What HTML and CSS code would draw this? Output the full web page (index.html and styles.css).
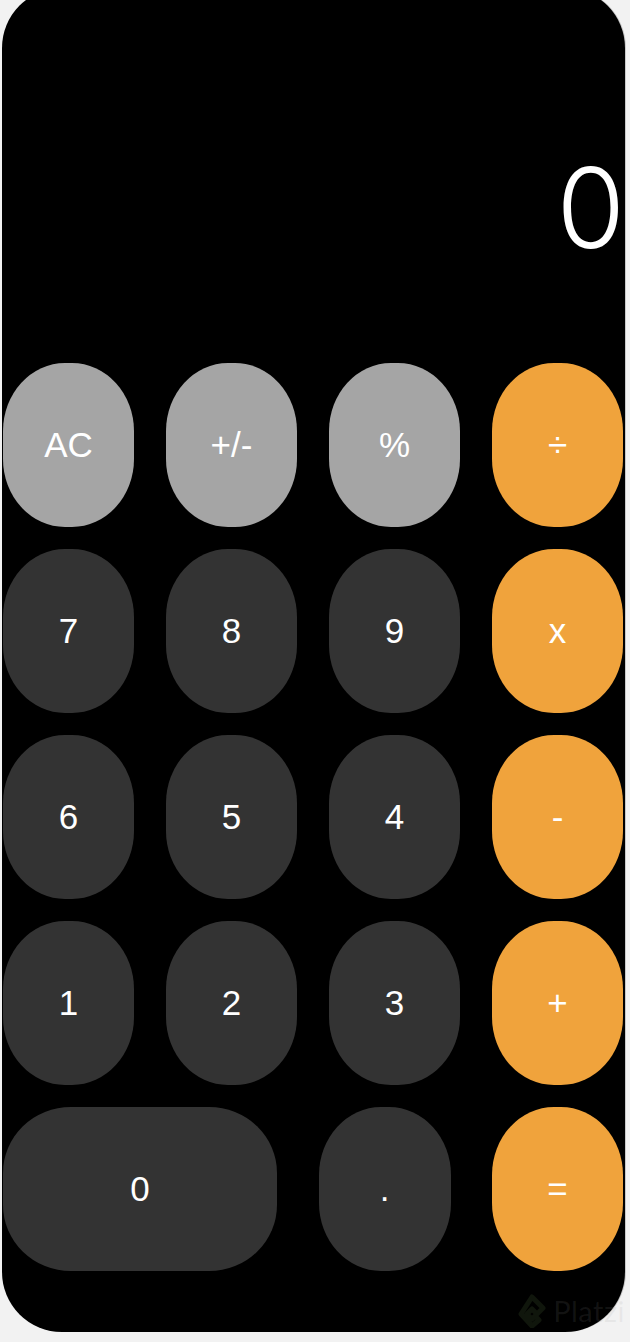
FILE: index.html
```html
<!DOCTYPE html>
<html lang="es">
<head>
<meta charset="utf-8">
<title>Calculadora</title>
<link rel="stylesheet" href="styles.css">
</head>
<body>
<div class="calc">
  <div class="display"><span class="result">0</span></div>
  <div class="keypad">
    <button class="key fn">AC</button>
    <button class="key fn">+/-</button>
    <button class="key fn">%</button>
    <button class="key op">÷</button>
    <button class="key num">7</button>
    <button class="key num">8</button>
    <button class="key num">9</button>
    <button class="key op">x</button>
    <button class="key num">6</button>
    <button class="key num">5</button>
    <button class="key num">4</button>
    <button class="key op">-</button>
    <button class="key num">1</button>
    <button class="key num">2</button>
    <button class="key num">3</button>
    <button class="key op">+</button>
    <div class="last-row">
      <button class="key num zero">0</button>
      <button class="key num dot">.</button>
      <button class="key op">=</button>
    </div>
  </div>
  <div class="watermark">
    <svg class="wm-logo" viewBox="0 0 30 34" width="30" height="34">
      <path d="M15 3 L26 14 L20 20 L15 15 L10 20 L15 25 L18 22 L22 26 L15 32 L4 20 Z" fill="none" stroke="currentColor" stroke-width="5" stroke-linejoin="round"/>
    </svg>
    <span class="wm-text">Platzi</span>
  </div>
</div>
</body>
</html>
```
FILE: styles.css
```css
html, body {
  margin: 0;
  padding: 0;
  background: #f2f2f2;
  overflow: hidden;
}

.calc {
  position: relative;
  box-sizing: border-box;
  width: 623px;
  height: 1344px;
  margin: -12px 0 0 2px;
  background: #000;
  border-radius: 60px;
  display: flex;
  flex-direction: column;
  box-shadow: 1px 0 0 #c8c8c8;
}

.display {
  height: 375px;
  box-sizing: border-box;
  display: flex;
  justify-content: flex-end;
  align-items: flex-end;
  padding: 0 0 100px 0;
}

.result {
  font-family: Inter, Roboto, "Liberation Sans", sans-serif;
  font-weight: 300;
  font-size: 111px;
  line-height: 1;
  color: #fff;
}

.keypad {
  display: grid;
  grid-template-columns: repeat(4, 131px);
  grid-auto-rows: 164px;
  column-gap: 32px;
  row-gap: 22px;
  padding: 0 0 0 1px;
}

.key {
  border: none;
  margin: 0;
  padding: 0;
  width: 131px;
  height: 164px;
  border-radius: 62px / 68px;
  font-family: "Liberation Sans", Arial, sans-serif;
  font-size: 35px;
  color: #fff;
  display: flex;
  align-items: center;
  justify-content: center;
}

.fn { background: #a5a5a5; }
.num { background: #333333; }
.op { background: #f0a33c; }

.last-row {
  grid-column: 1 / span 4;
  display: flex;
  justify-content: space-between;
  align-items: center;
}

.zero {
  width: 274px;
  border-radius: 68px / 66px;
}

.dot {
  width: 132px;
}

.watermark {
  position: absolute;
  right: 0;
  bottom: 4px;
  display: flex;
  align-items: center;
  gap: 6px;
  pointer-events: none;
}

.wm-logo {
  color: rgba(120, 170, 90, 0.13);
}

.wm-text {
  font-family: Lato, "Open Sans", sans-serif;
  font-size: 29px;
  color: rgba(150, 150, 150, 0.12);
  letter-spacing: 0.5px;
}
```
